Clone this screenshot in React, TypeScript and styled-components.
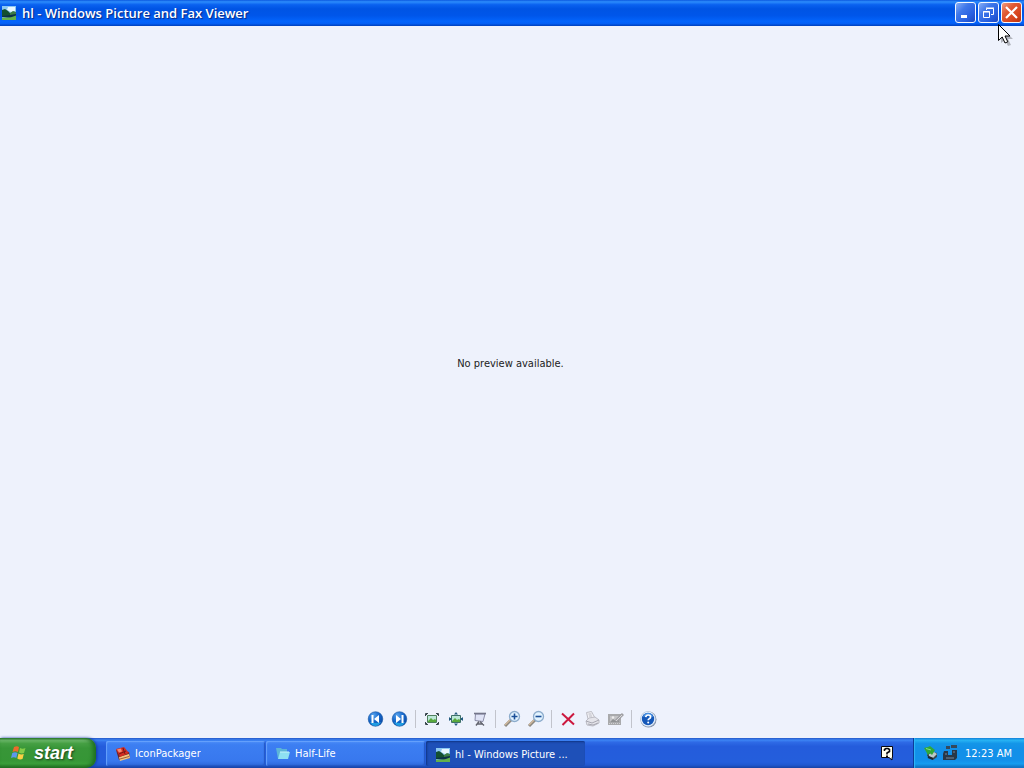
import React from "react";
import styled, { createGlobalStyle, css } from "styled-components";

const uiFont = `"DejaVu Sans Condensed", Tahoma, "DejaVu Sans", sans-serif`;

const GlobalStyle = createGlobalStyle`
  *, *::before, *::after { box-sizing: border-box; }
  body { margin: 0; font-family: ${uiFont}; font-size: 11px; }
  button { font: inherit; border: 0; padding: 0; background: none; color: inherit; }
  svg { display: block; flex: none; }
`;

const Desktop = styled.div`
  display: flex;
  flex-direction: column;
  min-height: 100vh;
  background: #eef2fc;
`;

const TitleBar = styled.header`
  display: flex;
  align-items: center;
  height: 26px;
  padding: 0 2px 1px 1px;
  background: linear-gradient(
    #0b58e0 0%, #2c8cfc 7%, #0a62f0 18%, #0054e4 34%,
    #0056ea 60%, #0364fc 82%, #0460f6 90%, #0040bc 100%
  );
`;

const WindowTitle = styled.h1`
  flex: 1;
  margin: 0 0 0 5px;
  padding-top: 1px;
  overflow: hidden;
  white-space: nowrap;
  color: #fff;
  font: 600 13px/20px "Open Sans", "Noto Sans", sans-serif;
  text-shadow: 1px 1px 1px #0a2a84;
`;

const CaptionButtons = styled.div`
  display: flex;
  gap: 2px;
`;

const CaptionButton = styled.button<{ $close?: boolean }>`
  display: grid;
  place-items: center;
  width: 21px;
  height: 21px;
  border: 1px solid #f4f8ff;
  border-radius: 3px;
  background: ${(p) =>
    p.$close
      ? "linear-gradient(135deg, #ee9c80 0%, #e05a34 35%, #d8441c 70%, #b83410 100%)"
      : "linear-gradient(135deg, #88aef6 0%, #3f78ea 35%, #2860e0 70%, #1c48c0 100%)"};
`;

const Viewer = styled.main`
  display: flex;
  flex: 1;
  flex-direction: column;
`;

const Preview = styled.section`
  display: flex;
  flex: 1;
  align-items: center;
  justify-content: center;
  padding-right: 3px;
  color: #222;
`;

const ToolBar = styled.div`
  display: flex;
  justify-content: center;
  align-items: center;
  height: 38px;
`;

const ToolButton = styled.button`
  display: grid;
  place-items: center;
  width: 24px;
  height: 24px;
`;

const Separator = styled.span`
  width: 1px;
  height: 18px;
  margin: 0 4px 0 3px;
  background: #c2c4cc;
`;

const TaskBar = styled.footer`
  display: flex;
  height: 30px;
  color: #fff;
  background: linear-gradient(
    #2458c8 0%, #3c84f4 7%, #2e6ae6 14%, #245cdc 28%,
    #245edc 80%, #2058d0 90%, #1842a4 100%
  );
`;

const StartButton = styled.button`
  display: flex;
  align-items: center;
  gap: 7px;
  width: 96px;
  padding-left: 11px;
  border-radius: 0 10px 10px 0;
  font: italic bold 18px/24px "Liberation Sans", Arial, sans-serif;
  text-shadow: 1px 1px 2px #1c401c;
  box-shadow: inset -3px 0 4px #1e6e20, 1px 0 3px #10389c;
  background: linear-gradient(
    #2c7a2c 0%, #72bc70 7%, #46a044 18%, #389638 34%,
    #369636 74%, #3a9e3a 86%, #226e22 100%
  );
`;

const TaskList = styled.nav`
  display: flex;
  flex: 1;
  gap: 1px;
  min-width: 0;
  padding: 3px 0 2px 10px;
`;

const TaskButton = styled.button<{ $active?: boolean }>`
  display: flex;
  flex: 0 1 159px;
  align-items: center;
  gap: 4px;
  min-width: 0;
  padding: 0 9px;
  border-radius: 2px;
  ${(p) =>
    p.$active
      ? css`
          padding-top: 2px;
          background: #1e50b8;
          box-shadow: inset 1px 1px 2px #103484;
        `
      : css`
          background: linear-gradient(#4a8cf8 0%, #3c7ef2 16%, #3878ee 80%, #2c66d8 100%);
          box-shadow: inset 1px 1px 1px #68a2fc, inset -1px -1px 1px #2458c4;
        `}
`;

const TaskLabel = styled.span`
  overflow: hidden;
  white-space: nowrap;
  text-overflow: ellipsis;
`;

const LanguageBar = styled.button`
  display: grid;
  place-items: center;
  width: 52px;
`;

const Tray = styled.aside`
  display: flex;
  align-items: center;
  gap: 3px;
  padding: 0 12px 0 9px;
  border-left: 1px solid #0c3c98;
  box-shadow: inset 1px 0 1px #30b8f8;
  background: linear-gradient(
    #1078d4 0%, #28b4f4 7%, #1496e8 18%, #1290e8 34%,
    #1290ea 74%, #149cf0 86%, #0e68b8 100%
  );
`;

const Clock = styled.time`
  margin-left: 4px;
  white-space: nowrap;
`;

const Pointer = styled.svg`
  position: absolute;
  top: 23px;
  right: 10px;
  pointer-events: none;
`;

const PictureIcon = () => (
  <svg width="16" height="16" viewBox="0 0 16 16" aria-hidden="true">
    <path d="M1 1h14v13H1z" fill="#8cc8f2" />
    <path d="M7 2h7v4l-4 1-4-2z" fill="#e8f7ff" />
    <path d="M1 5l3-1 3 2 3 3 5-1v3H1z" fill="#145030" />
    <path d="M9 8l3-2 3 1v3H9z" fill="#3c7c44" />
    <path d="M1 11l8-1 6-1v3l-6 1-8-1z" fill="#0b3048" />
    <path d="M1 12.500q8 1 14-2V15H1z" fill="#62b04c" />
  </svg>
);

const MinimizeIcon = () => (
  <svg width="15" height="15" aria-hidden="true">
    <path d="M3 10h6v3H3z" fill="#fff" />
  </svg>
);

const RestoreIcon = () => (
  <svg width="15" height="15" fill="none" stroke="#fff" aria-hidden="true">
    <path d="M5.500 5V3.500h7v6H10M5 3h8" />
    <path d="M2.500 6.500h6v6h-6zM2 7h7" />
  </svg>
);

const CloseIcon = () => (
  <svg width="15" height="15" aria-hidden="true">
    <path d="M2 2l11 11M13 2L2 13" stroke="#fff" strokeWidth="2.200" />
  </svg>
);

const SkipIcon = ({ forward = false }: { forward?: boolean }) => (
  <svg width="18" height="18" viewBox="0 0 18 18" aria-hidden="true">
    <defs>
      <radialGradient id={forward ? "skipNext" : "skipPrev"} cx="35%" cy="25%" r="80%">
        <stop offset="0" stopColor="#5aa4ec" />
        <stop offset=".5" stopColor="#1668cc" />
        <stop offset="1" stopColor="#0a48a4" />
      </radialGradient>
    </defs>
    <circle cx="8.500" cy="9" r="7.300" fill={`url(#${forward ? "skipNext" : "skipPrev"})`} stroke="#1454a0" strokeWidth=".6" />
    <path d="M3 12q5.500 2 11 0-2 4-5.500 4T3 12z" fill="#24b4f0" opacity=".75" />
    <path
      d={forward ? "M5 5l5 4-5 4zM10.500 5h2v8h-2z" : "M12 5L7 9l5 4zM4.500 5h2v8h-2z"}
      fill="#fff"
    />
  </svg>
);

const BestFitIcon = () => (
  <svg width="16" height="16" viewBox="0 0 16 16" aria-hidden="true">
    <path d="M3.500 4.500h9v7h-9z" fill="#bce8d8" stroke="#508060" />
    <path d="M4 10l3-3 2 2 2-1 1 1v2H4z" fill="#58a83c" />
    <path d="M1.500 5V2.500H4M12 2.500h2.500V5M14.500 11v2.500H12M4 13.500H1.500V11M2 3l1 1M14 3l-1 1M2 13l1-1M14 13l-1-1" fill="none" stroke="#38464c" />
  </svg>
);

const ActualSizeIcon = () => (
  <svg width="16" height="16" viewBox="0 0 16 16" aria-hidden="true">
    <path d="M3.500 4.500h9v7h-9z" fill="#bce8d8" stroke="#3e7068" />
    <path d="M4 10l3-3 2 2 2-1 1 1v2H4z" fill="#58a83c" />
    <path d="M8 1l2 2.500H6zM8 15l2-2.500H6zM1 6l2.500 2L1 10zM15 6l-2.500 2 2.500 2z" fill="#245c80" />
    <path d="M1 8h2M13 8h2" stroke="#245c80" strokeWidth="2" />
  </svg>
);

const SlideShowIcon = () => (
  <svg width="16" height="16" viewBox="0 0 16 16" fill="none" aria-hidden="true">
    <path d="M3.500 3l-.5 6.500 8 1L13 3z" fill="#dfe3f6" stroke="#8c8ea8" />
    <path d="M2 2.500h12" stroke="#74768a" strokeWidth="1.600" />
    <path d="M7 10.500l-3 4M8 10.500l4 4M5 13h6" stroke="#62646e" strokeWidth="1.400" />
  </svg>
);

const ZoomIcon = ({ plus = false }: { plus?: boolean }) => (
  <svg width="18" height="18" viewBox="0 0 18 18" aria-hidden="true">
    <path d="M2 16l6-6" stroke="#8c8880" strokeWidth="3" />
    <path d="M2 15l5-5" stroke="#d0b89c" strokeWidth="1.400" />
    <circle cx="11.500" cy="6.500" r="5" fill="#e2f3ff" stroke="#8caccc" strokeWidth="1.300" />
    <path d={plus ? "M8.500 6.500h6M11.500 3.500v6" : "M8.500 6.500h6"} stroke="#1c5098" strokeWidth="1.600" />
  </svg>
);

const DeleteIcon = () => (
  <svg width="16" height="16" aria-hidden="true">
    <path d="M2 2.500l12 11M14 2.500L2.500 14" stroke="#cc183e" strokeWidth="2" />
  </svg>
);

const PrintIcon = () => (
  <svg width="16" height="16" viewBox="0 0 16 16" fill="#f0f0f4" stroke="#bcbcc4" aria-hidden="true">
    <path d="M4 8L2.500 1.500l5-1L11 7z" />
    <path d="M4.500 3h3M5 5h3" />
    <path d="M2 10l3-3 6-1 4 3v3l-6 3-6-1z" fill="#e4e4ea" />
    <path d="M2 10l6 2 7-3M4 13l5 1 5-2" fill="none" stroke="#a8a8b2" />
  </svg>
);

const EditIcon = () => (
  <svg width="16" height="16" viewBox="0 0 16 16" fill="none" aria-hidden="true">
    <path d="M0 3h13v11H0z" fill="#a9aaac" />
    <path d="M2 5h9v6H2z" fill="#c4c4c6" />
    <path d="M2 11l3-3 3 2 3-2v3z" fill="#909294" />
    <path d="M1 12.500h11" stroke="#d0d0d2" strokeDasharray="1 1" />
    <path d="M8 10l7-7" stroke="#a0a0a4" strokeWidth="3" />
    <path d="M8 10l6-6" stroke="#d8d8da" />
    <circle cx="5" cy="6.500" r="1.200" fill="#eee" />
  </svg>
);

const HelpIcon = () => (
  <svg width="18" height="18" viewBox="0 0 18 18" aria-hidden="true">
    <circle cx="9.500" cy="9.500" r="8" fill="#8290a8" />
    <circle cx="9" cy="9" r="7.500" fill="#edf5ff" stroke="#b4c4d8" strokeWidth=".6" />
    <circle cx="9" cy="9" r="6.200" fill="#1658b8" />
    <path d="M4 7q1-4 5-4t5 4q-5-2-10 0z" fill="#4c94e4" />
    <path d="M6.700 7.200Q7 5 9.200 5q2.400 0 2.400 2 0 1.200-1.400 1.800-1 .4-1 1.500" fill="none" stroke="#fff" strokeWidth="1.700" />
    <circle cx="9.200" cy="12.400" r="1" fill="#fff" />
  </svg>
);

const FlagIcon = () => (
  <svg width="16" height="16" viewBox="0 0 16 16" aria-hidden="true">
    <path d="M3 2q3-1.500 5 0L7 7Q4.500 5.500 1.500 7z" fill="#ee6a2c" />
    <path d="M9 3q2.500 1.500 5.500 0L13 8q-2.500 1-5-.5z" fill="#84cc48" />
    <path d="M1.300 8Q4 6.500 6.500 8L5.300 13Q3 11.500 0 13z" fill="#5c98ec" />
    <path d="M7.500 8.500q2.500 1.500 5.300.5L11.500 14q-3 1-5.200-.5z" fill="#fcd044" />
  </svg>
);

const PackageIcon = () => (
  <svg width="16" height="16" viewBox="0 0 16 16" aria-hidden="true">
    <path d="M1 4l3 10 11-2-1-6z" fill="#6c2424" />
    <path d="M4 11l10-3 1 4-10 3z" fill="#f0c480" />
    <path d="M1 3l8-2 5 6-9 4z" fill="#d42c20" />
    <path d="M2 3.500l4-1 1 3-3 1z" fill="#f48c74" />
    <path d="M8 2l2 6M4 8l7-3" stroke="#731818" />
    <path d="M5 13l9-2.500" stroke="#a85c38" />
  </svg>
);

const FolderIcon = () => (
  <svg width="16" height="16" viewBox="0 0 16 16" aria-hidden="true">
    <path d="M1 2h5l1 1h5v9L3 13z" fill="#5cb4d8" />
    <path d="M3 13l2-7h10l-2 7z" fill="#8ee0f2" />
    <path d="M5 6h9" stroke="#c4f4fc" />
  </svg>
);

const HelpBalloonIcon = () => (
  <svg width="14" height="16" viewBox="0 0 14 16" aria-hidden="true">
    <path d="M1.500 1.500h11v11H12V15l-3-2.500H1.500z" fill="#fffff0" stroke="#080810" />
    <path d="M4.500 6V4.500L6 3.500h2l1.500 1v2L7 8v1.500" fill="none" stroke="#080810" strokeWidth="1.600" />
    <path d="M6 10.500h2v1.500H6z" fill="#080810" />
  </svg>
);

const RemoveHardwareIcon = () => (
  <svg width="16" height="16" viewBox="0 0 16 16" aria-hidden="true">
    <path d="M5 6l9 2v4l-4 3-6-4z" fill="#3c4850" />
    <path d="M6 9l5-2 3 2-4 4-4-2z" fill="#bcc8c8" />
    <path d="M1 3l4-1 2-1 5 4-3 5-2-2-2 2z" fill="#30a838" />
    <path d="M3 3.500l5 1.500" stroke="#84e080" />
    <path d="M5 12l5 2" stroke="#1c242c" strokeWidth="2" />
  </svg>
);

const DeviceIcon = () => (
  <svg width="16" height="16" viewBox="0 0 16 16" aria-hidden="true">
    <path d="M4 1h4v3H4zM9 0h6v3H9z" fill="#34495c" />
    <path d="M2 6h4v4h4V5h5v8l-2 2H1V9z" fill="#283848" />
    <path d="M3 9h2M4 13h8M11 7h2" stroke="#788898" />
  </svg>
);

export default function App() {
  return (
    <Desktop>
      <GlobalStyle />
      <TitleBar>
        <PictureIcon />
        <WindowTitle>hl - Windows Picture and Fax Viewer</WindowTitle>
        <CaptionButtons>
          <CaptionButton aria-label="Minimize"><MinimizeIcon /></CaptionButton>
          <CaptionButton aria-label="Restore"><RestoreIcon /></CaptionButton>
          <CaptionButton aria-label="Close" $close><CloseIcon /></CaptionButton>
        </CaptionButtons>
      </TitleBar>
      <Viewer>
        <Preview>No preview available.</Preview>
        <ToolBar role="toolbar" aria-label="Picture tools">
          <ToolButton aria-label="Previous Image"><SkipIcon /></ToolButton>
          <ToolButton aria-label="Next Image"><SkipIcon forward /></ToolButton>
          <Separator />
          <ToolButton aria-label="Best Fit"><BestFitIcon /></ToolButton>
          <ToolButton aria-label="Actual Size"><ActualSizeIcon /></ToolButton>
          <ToolButton aria-label="Start Slide Show"><SlideShowIcon /></ToolButton>
          <Separator />
          <ToolButton aria-label="Zoom In"><ZoomIcon plus /></ToolButton>
          <ToolButton aria-label="Zoom Out"><ZoomIcon /></ToolButton>
          <Separator />
          <ToolButton aria-label="Delete"><DeleteIcon /></ToolButton>
          <ToolButton aria-label="Print" disabled><PrintIcon /></ToolButton>
          <ToolButton aria-label="Edit" disabled><EditIcon /></ToolButton>
          <Separator />
          <ToolButton aria-label="Help"><HelpIcon /></ToolButton>
        </ToolBar>
      </Viewer>
      <TaskBar>
        <StartButton><FlagIcon />start</StartButton>
        <TaskList aria-label="Open windows">
          <TaskButton><PackageIcon /><TaskLabel>IconPackager</TaskLabel></TaskButton>
          <TaskButton><FolderIcon /><TaskLabel>Half-Life</TaskLabel></TaskButton>
          <TaskButton $active><PictureIcon /><TaskLabel>hl - Windows Picture ...</TaskLabel></TaskButton>
        </TaskList>
        <LanguageBar aria-label="Language help"><HelpBalloonIcon /></LanguageBar>
        <Tray>
          <RemoveHardwareIcon />
          <DeviceIcon />
          <Clock>12:23 AM</Clock>
        </Tray>
      </TaskBar>
      <Pointer width="17" height="24" viewBox="0 0 17 24" aria-hidden="true">
        <path d="M4 4v16l4-3 3 6 3-1-3-6h5z" fill="#000" opacity=".25" />
        <path d="M1.500 1.500v16l3.700-3.500 2.800 6 2.800-1.200L8 13h5z" fill="#fff" stroke="#000" />
      </Pointer>
    </Desktop>
  );
}
